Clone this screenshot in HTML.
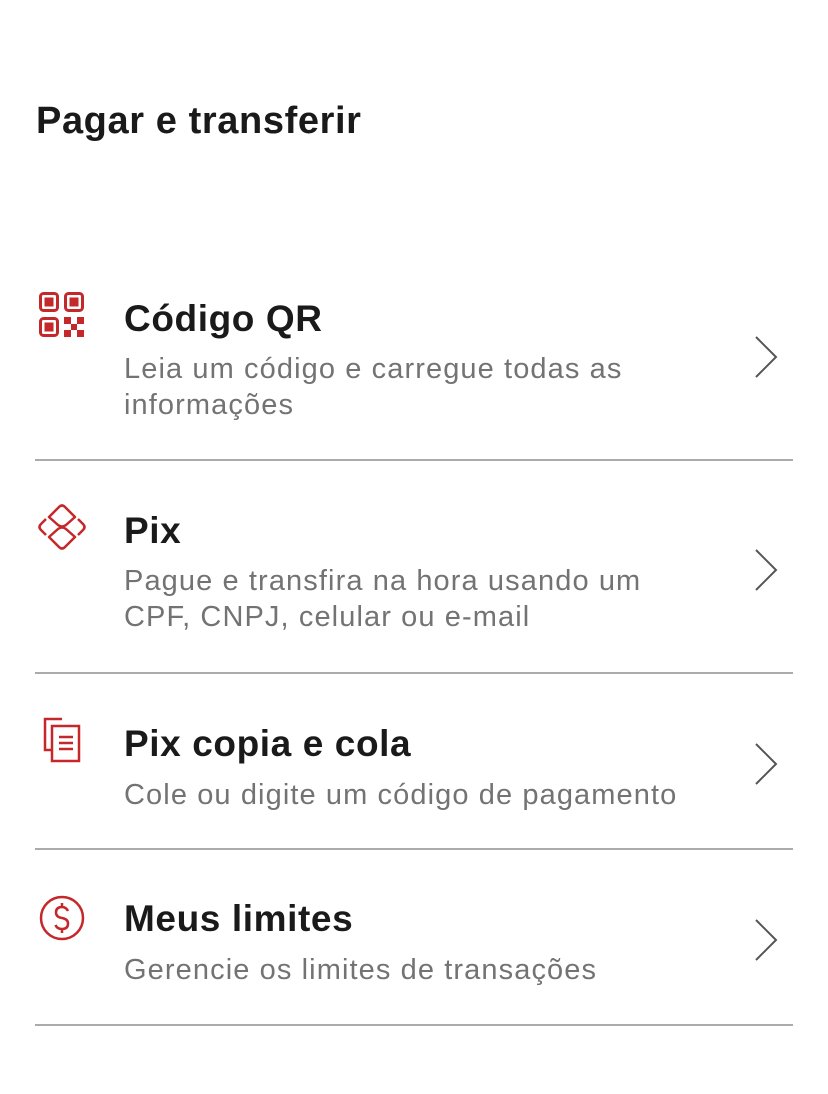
<!DOCTYPE html>
<html><head><meta charset="utf-8"><style>
body{margin:0;width:828px;height:1094px;background:#fff;font-family:"Liberation Sans",sans-serif;position:relative;overflow:hidden}
.h{position:absolute;left:36px;top:100px;font-size:38px;font-weight:bold;color:#1a1a1a;letter-spacing:0.6px}
.t{position:absolute;left:124px;font-size:37px;font-weight:bold;color:#1a1a1a;white-space:nowrap;letter-spacing:0.6px}
.s{position:absolute;left:124px;font-size:29px;line-height:36px;color:#737373;letter-spacing:1.1px;white-space:nowrap}
.d{position:absolute;left:35px;width:758px;height:2px;background:#ababab}
svg{position:absolute}
</style></head><body>
<div class="h">Pagar e transferir</div>

<svg style="left:39px;top:292px" width="46" height="46" viewBox="0 0 46 46" fill="none" stroke="#c4282a" stroke-width="3">
<rect x="1.5" y="1.5" width="17" height="17" rx="3"/><rect x="5.5" y="5.5" width="9" height="9" fill="#c4282a" stroke="none"/>
<rect x="26.5" y="1.5" width="17" height="17" rx="3"/><rect x="30.5" y="5.5" width="9" height="9" fill="#c4282a" stroke="none"/>
<rect x="1.5" y="26.5" width="17" height="17" rx="3"/><rect x="5.5" y="30.5" width="9" height="9" fill="#c4282a" stroke="none"/>
<g fill="#c4282a" stroke="none"><rect x="25" y="25" width="7" height="7"/><rect x="38" y="25" width="7" height="7"/><rect x="32" y="32" width="6" height="6"/><rect x="25" y="38" width="7" height="7"/><rect x="38" y="38" width="7" height="7"/></g>
</svg>
<div class="t" style="top:298px">Código QR</div>
<div class="s" style="top:351px">Leia um código e carregue todas as<br>informações</div>
<svg style="left:747px;top:334px" width="34" height="46" viewBox="0 0 34 46"><path d="M9 3 L29 23 L9 43" fill="none" stroke="#555" stroke-width="2"/></svg>
<div class="d" style="top:459px"></div>

<svg style="left:38px;top:503px" width="48" height="48" viewBox="0 0 48 48" fill="none" stroke="#c4282a" stroke-width="2.5" stroke-linejoin="round">
<path d="M11 14 L21 4 Q24 1 27 4 L37 14 L28 22 Q24 25 20 22 Z"/>
<path d="M11 34 L21 44 Q24 47 27 44 L37 34 L28 26 Q24 23 20 26 Z"/>
<path d="M8 16 L3 21 Q0 24 3 27 L8 32"/><path d="M40 16 L45 21 Q48 24 45 27 L40 32"/>
</svg>
<div class="t" style="top:510px">Pix</div>
<div class="s" style="top:563px">Pague e transfira na hora usando um<br>CPF, CNPJ, celular ou e-mail</div>
<svg style="left:747px;top:547px" width="34" height="46" viewBox="0 0 34 46"><path d="M9 3 L29 23 L9 43" fill="none" stroke="#555" stroke-width="2"/></svg>
<div class="d" style="top:672px"></div>

<svg style="left:42px;top:716px" width="40" height="48" viewBox="0 0 40 48" fill="none" stroke="#c4282a" stroke-width="2.5">
<path d="M20 3 H3 V34 H9"/><rect x="10" y="10" width="27" height="35" fill="#fff"/>
<path d="M17 21 H31 M17 27 H31 M17 33 H31"/>
</svg>
<div class="t" style="top:723px">Pix copia e cola</div>
<div class="s" style="top:777px">Cole ou digite um código de pagamento</div>
<svg style="left:747px;top:741px" width="34" height="46" viewBox="0 0 34 46"><path d="M9 3 L29 23 L9 43" fill="none" stroke="#555" stroke-width="2"/></svg>
<div class="d" style="top:848px"></div>

<svg style="left:38px;top:894px" width="48" height="48" viewBox="0 0 48 48" fill="none" stroke="#c4282a" stroke-width="2.5">
<circle cx="24" cy="24" r="21"/>
<path d="M30 17 Q28 13 24 13 Q18 13 18 18.5 Q18 23 24 24 Q30 25 30 29.5 Q30 35 24 35 Q19 35 17.5 31 M24 9 V13 M24 35 V39"/>
</svg>
<div class="t" style="top:898px">Meus limites</div>
<div class="s" style="top:952px">Gerencie os limites de transações</div>
<svg style="left:747px;top:917px" width="34" height="46" viewBox="0 0 34 46"><path d="M9 3 L29 23 L9 43" fill="none" stroke="#555" stroke-width="2"/></svg>
<div class="d" style="top:1024px"></div>
</body></html>
